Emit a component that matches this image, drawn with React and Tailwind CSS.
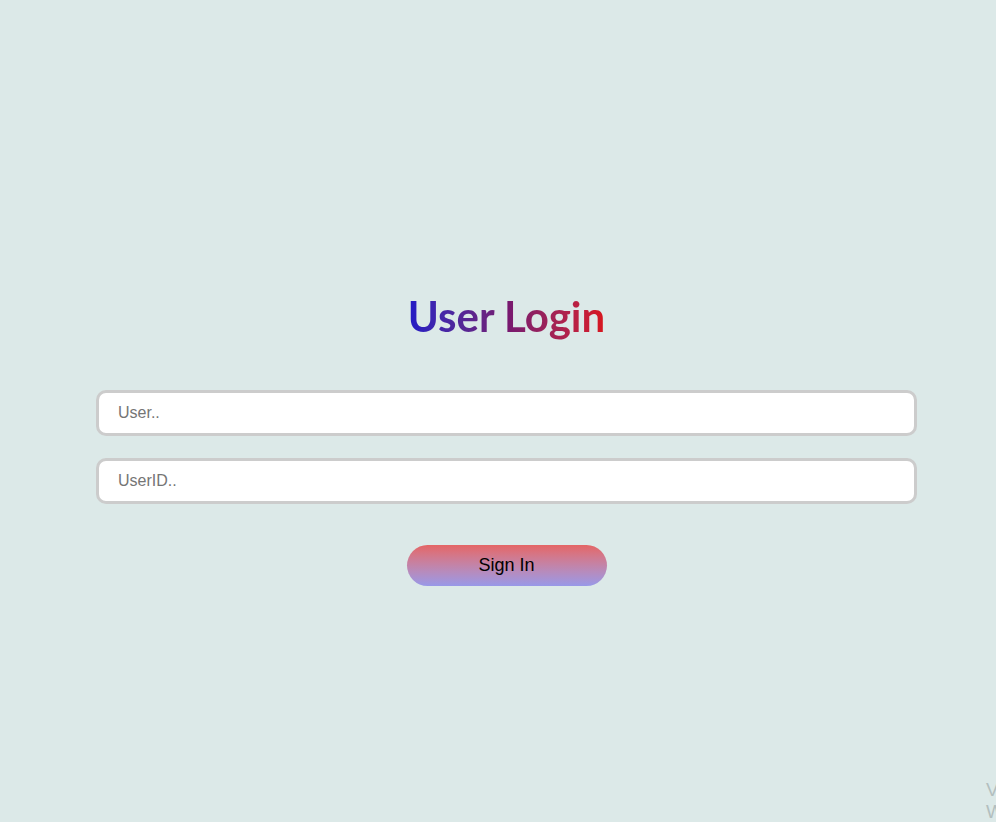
export default function App() {
  return (
    <div className="relative min-h-[822px] w-full overflow-hidden bg-[#dce9e8]" style={{ fontFamily: "'Liberation Sans', Arial, sans-serif" }}>
      <div className="flex flex-col items-center pl-[96px] w-[917px] pt-[287px]">
        <h1
          className="bg-gradient-to-r from-[#2219c6] via-[#761870] to-[#d8151a] bg-clip-text text-transparent text-[42px] leading-[58px] font-bold"
          style={{ fontFamily: "Lato, 'Open Sans', sans-serif" }}
        >
          User Login
        </h1>
        <div className="mt-[45px] flex w-full flex-col gap-[22px]">
          <input
            placeholder="User.."
            className="h-[46px] w-full rounded-[10px] border-[3px] border-[#cccccc] bg-white px-[19px] text-[16px] text-black outline-none placeholder:text-[#757575]"
          />
          <input
            placeholder="UserID.."
            className="h-[46px] w-full rounded-[10px] border-[3px] border-[#cccccc] bg-white px-[19px] text-[16px] text-black outline-none placeholder:text-[#757575]"
          />
        </div>
        <button className="mt-[41px] h-[41px] w-[200px] rounded-full bg-gradient-to-b from-[#e46565] to-[#9898e8] text-[18px] text-black">
          Sign In
        </button>
      </div>
      <div className="absolute left-[986px] top-[779px] text-[19px] leading-[22px] text-[#b3bfbf]">
        <div>V</div>
        <div>W</div>
      </div>
    </div>
  );
}
